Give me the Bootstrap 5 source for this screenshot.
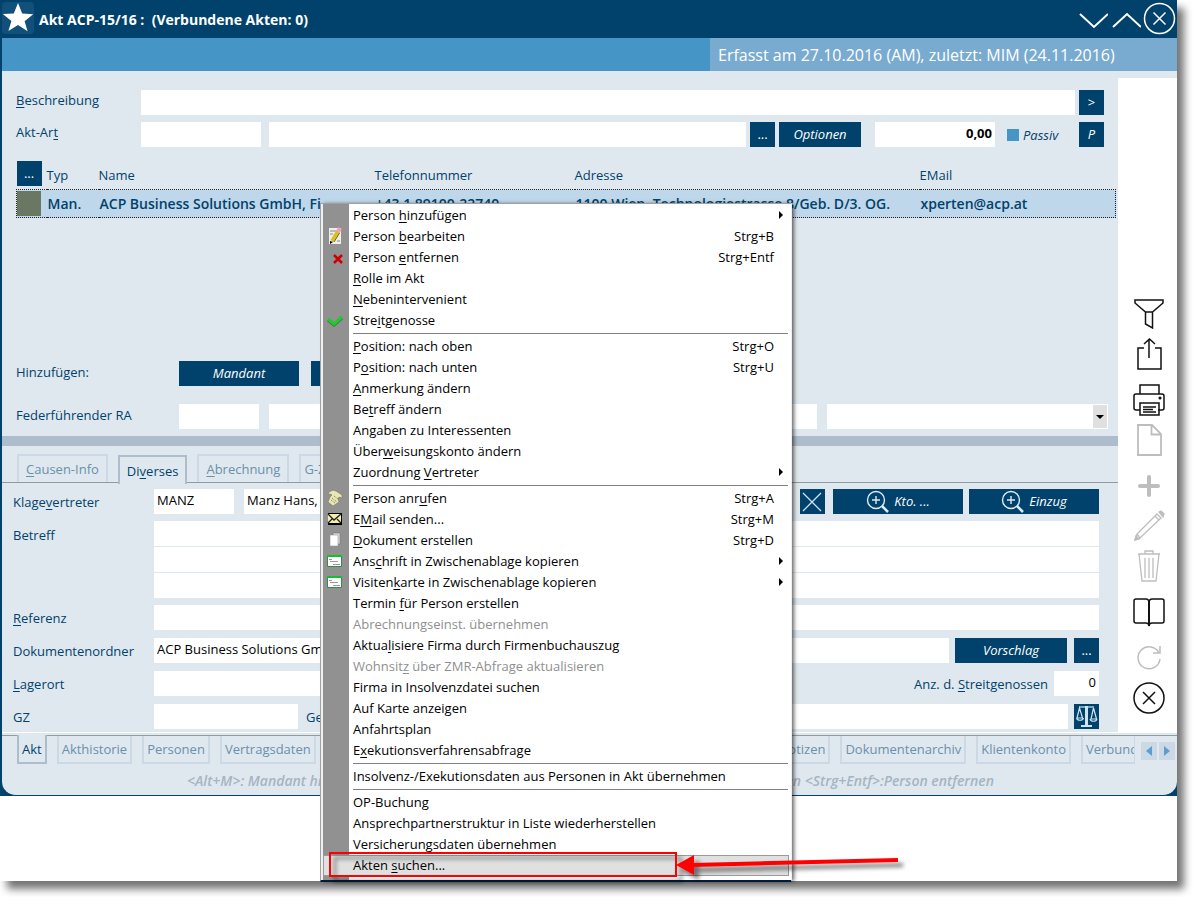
<!DOCTYPE html>
<html lang="de">
<head>
<meta charset="utf-8">
<meta name="viewport" content="width=device-width, initial-scale=1">
<title>Akt ACP-15/16</title>
<link rel="stylesheet" href="https://cdn.jsdelivr.net/npm/bootstrap@5.3.0/dist/css/bootstrap.min.css">
<style>
:root{--navy:#00426b;--blue:#4595c6;--sky:#79abd1;--pale:#e0e8ef;--steel:#aebdcb;--tab:#ccd9e4}
body{font-family:"Open Sans","Noto Sans",sans-serif;font-size:13px;line-height:20px;color:var(--navy);background:#fff;overflow:hidden;min-height:100vh}
u{text-underline-offset:2px}
.sheet{margin-right:16px;padding-bottom:85px;background:#fff;box-shadow:7px 8px 8px rgba(0,0,0,.55)}
.win{background:var(--navy);padding-left:2px}
.win-body{background:var(--pale);border-radius:0 0 14px 14px;border-bottom:1px solid var(--navy)}
.titlebar{height:38px;color:#fff;background:var(--navy);margin-left:-2px}
.titlebar h1{font-size:14px;line-height:20px;font-weight:700;margin:2px 0 0 5px;white-space:pre}
.star{width:32px;height:32px;background:#12507c;border-radius:4px;margin-left:2px;margin-bottom:2px}
.statusbar{height:33px;background:var(--blue)}
.stamp{background:var(--sky);color:#fff;font-size:16px;padding-left:8px;width:467px}
.icon-btn{border:0;background:none;padding:0;color:inherit;display:flex;align-items:center;justify-content:center}
.content{min-width:0}
.pane{padding:19px 14px 0}
.line{height:25px}
.row-next{margin-top:7px}
.pane .lbl{width:125px;flex:none;padding-bottom:6px}
.pane .lbl-wide{width:163px;flex:none;padding-bottom:4px}
.fld{height:25px;border:0;border-radius:0;background:#fff;padding:0 3px 3px;font-size:13px;color:#000;min-width:0}
.w-code{width:80px;flex:none}
.w-120{width:120px;flex:none}
.cmd{height:25px;border:0;border-radius:0;padding:0 0 1px;background:var(--navy);color:#fff;font-size:13px;font-style:italic;line-height:20px;flex:none;display:flex;align-items:center;justify-content:center}
.cmd:hover{background:#0b557f;color:#fff}
.cmd-sq{width:25px}
.cmd-tall{width:130px;gap:5px}
.tick{appearance:none;width:12px;height:12px;background:var(--blue);margin:0 4px 0 0}
.people{table-layout:fixed;width:calc(100% + 12px);margin:14px 0 0;border-collapse:collapse;white-space:nowrap}
.people th{font-weight:400;padding:0;height:28px;vertical-align:middle}
.people th .cmd{margin-bottom:3px}
.people td{height:28px;padding:0 0 0 1px;font-size:14px;font-weight:600;background:#bfd7ea;border-top:1px dotted #222;border-bottom:1px dotted #222}
.people td:first-child{border-left:1px dotted #222;padding:0}
.people td:last-child{border-right:1px dotted #222}
.swatch{width:24px;height:25px;background:#6a7762}
.splitter{height:10px;background:var(--steel);margin-top:7px}
.tabs-top{height:37px;padding:8px 0 0 15px;border-bottom:1px solid #8f9ca1;gap:10px}
.tab{background:transparent;border:2px solid var(--tab);border-bottom:0;color:#6a90ab;padding:0 7px;height:28px;line-height:24px;font-size:13px;white-space:nowrap;flex:none}
.tab.on{color:var(--navy);border-color:var(--steel);background:var(--pale);margin-top:1px;position:relative;height:29px}
.detail{padding:6px 19px 3px 11px}
.detail .lbl{width:141px;flex:none}
.detail .line + .line{margin-top:8px}
.detail .block{margin:7px 0}
.block .fld{width:100%;display:block}
.side{width:59px;flex:none;margin-top:7px;background:#fff;padding:220px 0 0 3px;gap:8px;color:#111}
.side .icon-btn{width:32px;height:32px}
.side .off{color:#bdbdbd}
.side .apart{margin-top:6px}
.tabs-bottom{border-top:1px solid #8f9ca1;margin-top:2px;gap:10px;padding-left:15px;height:31px}
.tabs-bottom .tab{border:2px solid var(--tab);border-top:0;padding:0 3px;line-height:26px}
.tabs-bottom .tab.on{border-color:var(--steel);margin-top:-1px;height:29px}
.tabs-bottom .cut{width:54px;overflow:hidden;border-right-width:1px}
.pager{width:16px;height:18px;background:var(--tab);color:#5a9fd0}
.hints{height:29px;padding:0 183px 0 185px;font-size:14px;font-style:italic;font-weight:600;color:#a6b4c1;line-height:30px;white-space:nowrap}
.ctx{position:absolute;left:320px;top:203px;width:472px;border:1px solid #a0a0a0;border-right-color:#f0f0f0;border-bottom:2px solid #001c38;background:linear-gradient(90deg,#f0f0f0 2px,#919191 2px 28px,#fff 28px);padding:1px 2px 4px 2px;color:#000;box-shadow:3px 0 4px -1px rgba(0,0,0,.6)}
.ctx .entry{display:flex;align-items:center;width:100%;height:21px;padding:0 0 2px;border:0;background:none;color:#000;font-size:13px;line-height:20px;text-align:left}
.ctx .entry:disabled{color:#8f8f8f}
.ctx .ico{width:30px;flex:none;display:flex;padding:1px 0 0 3px}
.ctx .ico svg{width:18px;height:18px}
.ctx kbd{margin-left:auto;margin-right:15px;padding:0;background:none;color:#000;font:inherit}
.ctx .sub::after{content:"";margin-left:auto;margin-right:6px;border-left:4px solid #000;border-top:4px solid transparent;border-bottom:4px solid transparent}
.ctx hr{margin:2px 1px 2px 30px;border:0;border-top:1px solid #808080;opacity:1}
.ctx .hot{background:#e0e0e0;outline:1px solid #9a9a9a;outline-offset:-1px}
.marker{position:absolute;left:320px;top:845px;pointer-events:none}
</style>
</head>
<body>
<div class="position-relative">
<div class="sheet">
 <div class="win">
  <header class="titlebar d-flex align-items-center">
   <div class="star"><svg width="32" height="32" viewBox="0 0 32 32" fill="#fff"><path d="M16 1l4.2 10.6 11 .6-8.600 7 3 10L16 23l-9.600 6 3-10-8.600-7 11-.6z"/></svg></div>
   <h1>Akt ACP-15/16 :  (Verbundene Akten: 0)</h1>
   <div class="d-flex ms-auto align-items-center pe-1">
    <button class="icon-btn" aria-label="Nach unten"><svg width="33" height="32" fill="none" stroke="#fff" stroke-width="2"><path d="M5 11l14 13 14-13"/></svg></button>
    <button class="icon-btn" aria-label="Nach oben"><svg width="33" height="32" fill="none" stroke="#fff" stroke-width="2"><path d="M5 24l14-13 14 13"/></svg></button>
    <button class="icon-btn" aria-label="Schließen"><svg width="32" height="34" fill="none" stroke="#fff" stroke-width="1.5" overflow="visible"><circle cx="18.500" cy="16.500" r="15"/><path d="M12.500 10.500l12 12M24.500 10.500l-12 12"/></svg></button>
   </div>
  </header>
  <div class="statusbar d-flex justify-content-end"><div class="stamp d-flex align-items-center">Erfasst am 27.10.2016 (AM), zuletzt: MIM (24.11.2016)</div></div>
  <div class="win-body">
   <div class="d-flex">
    <main class="content flex-grow-1">
     <section class="pane">
      <div class="line d-flex align-items-center">
       <label class="lbl" for="desc"><u>B</u>eschreibung</label>
       <input id="desc" class="fld form-control me-1"><button class="cmd btn cmd-sq fst-normal">&gt;</button>
      </div>
      <div class="line row-next d-flex align-items-center">
       <label class="lbl" for="art">Akt-Ar<u>t</u></label>
       <input id="art" class="fld form-control w-120 me-2"><input class="fld form-control flex-grow-1" aria-label="Akt-Art Text">
       <button class="cmd btn cmd-sq mx-1 fst-normal">...</button><button class="cmd btn" style="width:82px">Optionen</button>
       <input class="fld form-control w-120 text-end fw-bold" style="margin-left:14px" value="0,00" aria-label="Betrag">
       <div class="d-flex align-items-center ms-2 ps-1" style="width:76px;flex:none"><input type="checkbox" class="tick" id="passiv"><label for="passiv" class="fst-italic">Passiv</label></div>
       <button class="cmd btn cmd-sq">P</button>
      </div>
      <table class="people">
       <colgroup><col style="width:30px"><col style="width:52px"><col style="width:276px"><col style="width:200px"><col><col style="width:196px"></colgroup>
       <thead><tr><th><button class="cmd btn cmd-sq fst-normal">...</button></th><th>Typ</th><th>Name</th><th>Telefonnummer</th><th>Adresse</th><th>EMail</th></tr></thead>
       <tbody><tr><td><div class="swatch"></div></td><td>Man.</td><td>ACP Business Solutions GmbH, Fi</td><td>+43 1 89100-22740</td><td>1100 Wien, Technologiestrasse 8/Geb. D/3. OG.</td><td>xperten@acp.at</td></tr></tbody>
      </table>
      <div class="line d-flex align-items-center" style="margin-top:143px">
       <span class="lbl-wide">Hinzufügen:</span><button class="cmd btn w-120">Mandant</button><button class="cmd btn w-120" style="margin-left:12px" aria-label="Gegner"></button>
      </div>
      <div class="line d-flex align-items-center" style="margin:18px -4px 0 0">
       <label class="lbl-wide" for="ra">Federführender RA</label>
       <div class="d-flex flex-grow-1" style="gap:10px"><input id="ra" class="fld form-control w-code"><input class="fld form-control flex-grow-1" style="width:auto" aria-label="RA Name">
       <div class="position-relative" style="width:281px"><select class="fld w-100" style="appearance:none" aria-label="RA Auswahl"><option></option></select><svg class="position-absolute" style="right:1px;top:1px;pointer-events:none" width="14" height="23"><path fill="#e0e0e0" d="M0 0h14v23H0z"/><path d="M3 10h8l-4 4z"/></svg></div></div>
      </div>
     </section>
     <div class="splitter"></div>
     <nav class="tabs-top d-flex">
      <button class="tab"><u>C</u>ausen-Info</button><button class="tab on">Di<u>v</u>erses</button><button class="tab"><u>A</u>brechnung</button><button class="tab" style="padding:0 3px">G-Z</button>
     </nav>
     <section class="detail">
      <div class="line d-flex align-items-center">
       <label class="lbl" for="kv">Klage<u>v</u>ertreter</label><input id="kv" class="fld form-control w-code" value="MANZ"><input class="fld form-control flex-grow-1" value="Manz Hans," aria-label="Name" style="margin:0 8px 0 10px">
       <button class="cmd btn cmd-sq me-2" aria-label="Löschen"><svg width="25" height="25" fill="none" stroke="#cfe3f2" stroke-width="1.3"><path d="M3 4l18 18M21 4L3 22"/></svg></button>
       <button class="cmd btn cmd-tall"><svg width="23" height="23" fill="none" stroke="#dcebf5" stroke-width="1.400"><circle cx="10" cy="10" r="8.500"/><path d="M6 10h8M10 6v8"/><path stroke-width="2.500" d="M16 16l6 6"/></svg>Kto. ...</button>
       <button class="cmd btn cmd-tall" style="margin-left:6px"><svg width="23" height="23" fill="none" stroke="#dcebf5" stroke-width="1.400"><circle cx="10" cy="10" r="8.500"/><path d="M6 10h8M10 6v8"/><path stroke-width="2.500" d="M16 16l6 6"/></svg>Einzug</button>
      </div>
      <div class="block d-flex">
       <label class="lbl pt-1" for="b1">Betreff</label>
       <div class="flex-grow-1 d-grid" style="gap:1px"><input id="b1" class="fld"><input class="fld" aria-label="Betreff 2"><input class="fld" aria-label="Betreff 3"></div>
      </div>
      <div class="line d-flex align-items-center"><label class="lbl" for="ref"><u>R</u>eferenz</label><input id="ref" class="fld form-control"></div>
      <div class="line d-flex align-items-center">
       <label class="lbl" for="dok">Dokumentenordner</label><input id="dok" class="fld form-control flex-grow-1" value="ACP Business Solutions GmbH"><button class="cmd btn" style="width:112px;margin:0 7px 0 6px">Vorschlag</button><button class="cmd btn cmd-sq fst-normal">...</button>
      </div>
      <div class="line d-flex align-items-center">
       <label class="lbl" for="lag"><u>L</u>agerort</label><input id="lag" class="fld form-control" style="width:300px"><label class="ms-auto" for="anz">Anz. d. <u>S</u>treitgenossen</label><input id="anz" class="fld form-control text-end" style="width:45px;margin-left:6px" value="0">
      </div>
      <div class="line d-flex align-items-center">
       <label class="lbl" for="gz">GZ</label><input id="gz" class="fld form-control" style="width:144px;flex:none"><label for="ger" class="ms-2 me-2">Gericht</label><input id="ger" class="fld form-control flex-grow-1"><button class="cmd btn cmd-sq" style="margin-left:6px" aria-label="Gericht wählen"><svg width="25" height="25" fill="none" stroke="#cfe3f2" stroke-width="1.200"><path d="M5 3h15"/><path stroke-width="3" d="M12.500 2v19"/><path stroke-width="2" d="M7 22h11"/><path d="M5.500 4L3 14h5.500zM19.500 4L17 15h5.500zM2.500 14c1 3 6 3 7 0M16 15c1 3 6 3 7 0"/></svg></button>
      </div>
     </section>
     <div class="bg-white" style="height:1px"></div>
    </main>
    <aside class="side d-flex flex-column align-items-center">
     <button class="icon-btn" aria-label="Filter"><svg width="32" height="32" fill="none" stroke="currentColor" stroke-width="1.500"><path d="M2 2h28v3l-10.500 9h-7L2 5zM12.500 14v12l7 4V14"/></svg></button>
     <button class="icon-btn" aria-label="Teilen"><svg width="32" height="32" fill="none" stroke="currentColor" stroke-width="1.500"><path d="M11 10H5v21h23V10h-6M16 20V1M11 6l5.500-5L22 6"/></svg></button>
     <button class="icon-btn apart" aria-label="Drucken"><svg width="32" height="32" fill="none" stroke="currentColor" stroke-width="1.500"><path d="M7 10V1h19v9M7 26H3q-2 0-2-2V12q0-2 2-2h26q2 0 2 2v12q0 2-2 2h-4M7 19h19v12H7zM10 23h13M10 25.500h10M10 28h13"/><circle cx="27" cy="14" r=".8"/></svg></button>
     <button class="icon-btn off" aria-label="Neu"><svg width="32" height="32" fill="none" stroke="currentColor" stroke-width="1.800"><path d="M5 1h14l9 9v21H5zM18.500 1v9.500H28"/></svg></button>
     <button class="icon-btn off apart" aria-label="Hinzufügen"><svg width="32" height="32" fill="none" stroke="currentColor" stroke-width="4" stroke-linecap="round"><path d="M16 7v18M7 16h18"/></svg></button>
     <button class="icon-btn off" aria-label="Bearbeiten"><svg width="32" height="32" fill="none" stroke="currentColor" stroke-width="1.300"><path d="M24 4l4 4L7 28l-5 2 2-6zM22 6l4 4M4 24l3 4"/><path fill="currentColor" d="M26 2l2-1 3 3-1 3zM2 30l1-4 3 3z"/></svg></button>
     <button class="icon-btn off" aria-label="Löschen"><svg width="32" height="32" fill="none" stroke="currentColor" stroke-width="1.300"><path d="M5 4h22M12 4V1h8v3M6 4l3 27h14l3-27M12 8v20M16 8v20M20 8v20"/></svg></button>
     <button class="icon-btn apart" aria-label="Buch"><svg width="32" height="32" fill="none" stroke="currentColor" stroke-width="1.500"><path d="M16 5q-1-2-3-2H3Q1 3 1 5v20q0 2 2 2h10q2 0 3 2 1-2 3-2h10q2 0 2-2V5q0-2-2-2H19q-2 0-3 2z"/><path stroke-width="2" d="M16 4v26"/></svg></button>
     <button class="icon-btn off apart" aria-label="Aktualisieren"><svg width="32" height="32" fill="none" stroke="currentColor" stroke-width="1.500"><path d="M26 11a11 11 0 1 0 1 6M27 4v7h-7"/></svg></button>
     <button class="icon-btn" aria-label="Beenden"><svg width="32" height="32" fill="none" stroke="currentColor" stroke-width="1.500"><circle cx="16" cy="16" r="15"/><path d="M10 10l12 12M22 10L10 22"/></svg></button>
    </aside>
   </div>
   <nav class="tabs-bottom d-flex">
    <button class="tab on">Akt</button><button class="tab">Akthistorie</button><button class="tab">Personen</button><button class="tab">Vertragsdaten</button>
    <button class="tab ms-auto">Notizen</button><button class="tab">Dokumentenarchiv</button><button class="tab">Klientenkonto</button><button class="tab cut text-start">Verbund</button>
    <div class="d-flex align-items-center" style="gap:2px;margin:0 2px 0 -4px"><button class="icon-btn pager" aria-label="Zurück"><svg width="6" height="10" fill="currentColor"><path d="M6 0v10L0 5z"/></svg></button><button class="icon-btn pager" aria-label="Weiter"><svg width="6" height="10" fill="currentColor"><path d="M0 0v10l6-5z"/></svg></button></div>
   </nav>
   <div class="hints d-flex justify-content-between"><span>&lt;Alt+M&gt;: Mandant hinzufügen</span><span>&lt;Strg+B&gt;:Person bearbeiten &lt;Strg+Entf&gt;:Person entfernen</span></div>
  </div>
 </div>
</div>

<div class="ctx" role="menu">
 <button class="entry sub"><span class="ico"></span>Person&nbsp;<u>h</u>inzufügen</button>
 <button class="entry"><span class="ico"><svg viewBox="0 0 18 18"><path fill="#eee" d="M3 1h12v16H3z"/><path stroke="#888" d="M4 4h6M4 7h3M11 14h3"/><path stroke="#d8c020" stroke-width="3.500" d="M12 4L6 14"/><path stroke="#776000" d="M13.500 6L8 15"/><path stroke="#f0a0b0" stroke-width="4" d="M14 1l-2 4"/><path d="M4 17v-3l3 1z"/></svg></span>Person&nbsp;<u>b</u>earbeiten<kbd>Strg+B</kbd></button>
 <button class="entry"><span class="ico"><svg viewBox="0 0 18 18"><path stroke="#c00" stroke-width="2.500" d="M8 7l8 8M16 7l-8 8"/></svg></span>Person&nbsp;<u>e</u>ntfernen<kbd>Strg+Entf</kbd></button>
 <button class="entry"><span class="ico"></span><u>R</u>olle im Akt</button>
 <button class="entry"><span class="ico"></span><u>N</u>ebenintervenient</button>
 <button class="entry"><span class="ico"><svg viewBox="0 0 18 18" fill="none"><path stroke="#3a7a3a" stroke-width="3" d="M2 9l6 5 8-7"/><path stroke="#1fc92f" stroke-width="3" d="M2 8l6 5 8-7"/></svg></span>Stre<u>i</u>tgenosse</button>
 <hr>
 <button class="entry"><span class="ico"></span><u>P</u>osition: nach oben<kbd>Strg+O</kbd></button>
 <button class="entry"><span class="ico"></span>P<u>o</u>sition: nach unten<kbd>Strg+U</kbd></button>
 <button class="entry"><span class="ico"></span><u>A</u>nmerkung ändern</button>
 <button class="entry"><span class="ico"></span>Be<u>t</u>reff ändern</button>
 <button class="entry"><span class="ico"></span>An<u>g</u>aben zu Interessenten</button>
 <button class="entry"><span class="ico"></span>Über<u>w</u>eisungskonto ändern</button>
 <button class="entry sub"><span class="ico"></span>Zuordnung&nbsp;<u>V</u>ertreter</button>
 <hr>
 <button class="entry"><span class="ico"><svg viewBox="0 0 18 18"><path fill="#e9e6b8" stroke="#77775a" stroke-width=".6" d="M3 3q4-3 7-1l6 4v3l-3-1-1 2 1 3-6 4-5-4 2-5 2-2-2-1-2 1z"/><path stroke="#777750" stroke-dasharray="1 1" d="M6 9l5 4M8 7l4 3M5 11l4 3"/></svg></span>Person anr<u>u</u>fen<kbd>Strg+A</kbd></button>
 <button class="entry"><span class="ico"><svg viewBox="0 0 18 18"><path d="M2 3h14v12H2z"/><path fill="#f2eeb0" d="M2 4h13v9H2z"/><path fill="none" stroke="#222" stroke-width="1.300" d="M2 4l6 6 7-6M2 13l4-4M15 13l-4-4"/></svg></span>E<u>M</u>ail senden...<kbd>Strg+M</kbd></button>
 <button class="entry"><span class="ico"><svg viewBox="0 0 18 18"><path fill="#ddd" stroke="#777" stroke-width=".6" d="M7 2h7v11H7z"/><path fill="#fff" stroke="#999" stroke-width=".6" d="M4 4h8v11H4z"/></svg></span><u>D</u>okument erstellen<kbd>Strg+D</kbd></button>
 <button class="entry sub"><span class="ico"><svg viewBox="0 0 18 18"><path fill="#fff" stroke="#2f8f4a" d="M1.500 4.500h14v10h-14z"/><path stroke="#10c030" stroke-width="2" d="M1 4h15"/><path stroke="#999" d="M3 7.500h3M4 9.500h8M7 12.500h7"/></svg></span>Ans<u>c</u>hrift in Zwischenablage kopieren</button>
 <button class="entry sub"><span class="ico"><svg viewBox="0 0 18 18"><path fill="#fff" stroke="#2f8f4a" d="M1.500 4.500h14v10h-14z"/><path stroke="#10c030" stroke-width="2" d="M1 4h15"/><path stroke="#999" d="M3 7.500h3M4 9.500h8M7 12.500h7"/></svg></span>Visiten<u>k</u>arte in Zwischenablage kopieren</button>
 <button class="entry"><span class="ico"></span>Termin&nbsp;<u>f</u>ür Person erstellen</button>
 <button class="entry" disabled><span class="ico"></span>Abrechnungseinst. übernehmen</button>
 <button class="entry"><span class="ico"></span>Aktua<u>l</u>isiere Firma durch Firmenbuchauszug</button>
 <button class="entry" disabled><span class="ico"></span>Wohnsit<u>z</u>&nbsp;über ZMR-Abfrage aktualisieren</button>
 <button class="entry"><span class="ico"></span>Firma in Insolvenzdatei suchen</button>
 <button class="entry"><span class="ico"></span>Auf Karte anzeigen</button>
 <button class="entry"><span class="ico"></span>Anfahrtsplan</button>
 <button class="entry"><span class="ico"></span>E<u>x</u>ekutionsverfahrensabfrage</button>
 <hr>
 <button class="entry"><span class="ico"></span>Insolvenz-/Exekutionsdaten aus Personen in Akt übernehmen</button>
 <hr>
 <button class="entry"><span class="ico"></span>OP-Buchung</button>
 <button class="entry"><span class="ico"></span>Ansprechpartnerstruktur in Liste wiederherstellen</button>
 <button class="entry"><span class="ico"></span>Versicherungsdaten übernehmen</button>
 <button class="entry hot"><span class="ico"></span>Akten&nbsp;<u>s</u>uchen...</button>
</div>

<svg class="marker" width="600" height="52" fill="none">
 <defs><filter id="soft" x="-5%" y="-30%" width="110%" height="170%"><feDropShadow dx="5" dy="5" stdDeviation="2" flood-color="#000" flood-opacity=".5"/></filter></defs>
 <g filter="url(#soft)"><path stroke="#f00" stroke-width="2" d="M10 8h346v23H10z"/><path stroke="#f00" stroke-width="4" d="M372 20l206-5"/><path fill="#f00" d="M356 20l18-10v20z"/></g>
</svg>
</div>
<script src="https://cdn.jsdelivr.net/npm/bootstrap@5.3.0/dist/js/bootstrap.bundle.min.js"></script>
</body>
</html>
